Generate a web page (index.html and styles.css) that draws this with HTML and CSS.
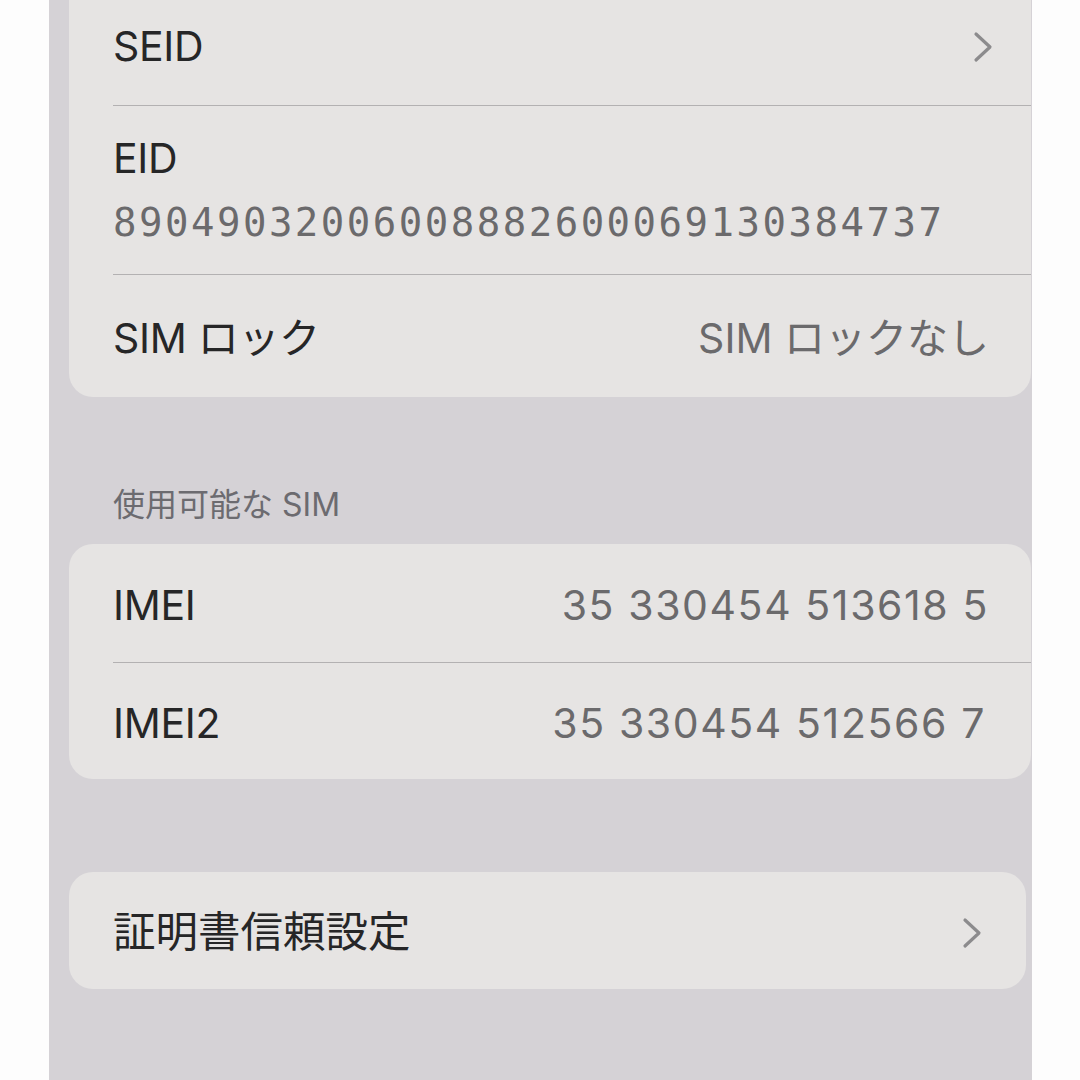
FILE: index.html
```html
<!DOCTYPE html>
<html lang="ja">
<head>
<meta charset="utf-8">
<link rel="stylesheet" href="styles.css">
</head>
<body>
<div class="screen">
  <div class="card card-top">
    <div class="row row-seid">
      <span class="label">SEID</span>
      <svg class="chev chev-1" viewBox="0 0 20 32"><polyline points="3,3 17,16 3,29"/></svg>
    </div>
    <div class="sep"></div>
    <div class="row row-eid">
      <span class="label">EID</span>
      <span class="mono">89049032006008882600069130384737</span>
    </div>
    <div class="sep"></div>
    <div class="row row-sim">
      <span class="label">SIM ロック</span>
      <span class="value">SIM ロックなし</span>
    </div>
  </div>

  <div class="header">使用可能な SIM</div>

  <div class="card card-imei">
    <div class="row row-imei1">
      <span class="label">IMEI</span>
      <span class="value num">35 330454 513618 5</span>
    </div>
    <div class="sep"></div>
    <div class="row row-imei2">
      <span class="label">IMEI2</span>
      <span class="value num">35 330454 512566 7</span>
    </div>
  </div>

  <div class="card card-cert">
    <div class="row row-cert">
      <span class="label label-cert">証明書信頼設定</span>
      <svg class="chev chev-2" viewBox="0 0 20 32"><polyline points="3,3 17,16 3,29"/></svg>
    </div>
  </div>
</div>
</body>
</html>
```
FILE: styles.css
```css
html, body {
  margin: 0;
  padding: 0;
  background: #fdfdfd;
}
body {
  width: 1080px;
  height: 1080px;
  overflow: hidden;
  font-family: Inter, "Noto Sans CJK JP", sans-serif;
}
.screen {
  margin-left: 49px;
  width: 983px;
  height: 1080px;
  background: #d5d2d6;
  display: flex;
  flex-direction: column;
  padding-left: 20px;
  box-sizing: border-box;
  overflow: hidden;
}
.card {
  background: #e6e4e3;
  border-radius: 24px;
  margin-right: 1px;
  display: flex;
  flex-direction: column;
}
.card-top {
  margin-top: -12px;
  border-radius: 0 0 24px 24px;
}
.row {
  display: flex;
  align-items: center;
  justify-content: space-between;
  padding: 0 38px 0 44px;
  box-sizing: border-box;
}
.label {
  font-size: 41px;
  color: #262627;
  line-height: 1;
  letter-spacing: -0.3px;
}
.label-cert {
  font-size: 42.5px;
  letter-spacing: 0;
}
.value {
  font-size: 41px;
  color: #6b6a6c;
  line-height: 1;
}
.num {
  letter-spacing: 1.6px;
}
.sep {
  height: 1px;
  background: #b3b1b2;
  margin-left: 44px;
}
.row-seid { height: 117px; }
.row-eid {
  height: 168px;
  flex-direction: column;
  align-items: flex-start;
  justify-content: flex-start;
  padding-top: 32px;
  gap: 24px;
}
.mono {
  font-family: "DejaVu Sans Mono", monospace;
  font-size: 39px;
  letter-spacing: 2.5px;
  color: #6b6a6c;
  line-height: 1;
}
.row-sim { height: 122px; padding-top: 4px; }
.row-sim .value { margin-right: 4px; }
.header {
  font-size: 32px;
  color: #6c6b70;
  margin: 93px 0 0 44px;
  height: 54px;
  line-height: 30px;
}
.card-imei { margin-right: 1px; }
.row-imei1 { height: 118px; padding-top: 4px; }
.row-imei2 { height: 116px; padding-top: 4px; }
.row-imei1 .value { margin-right: 4px; }
.row-imei2 .value { margin-right: 7px; }
.card-cert {
  margin-top: 93px;
  margin-right: 6px;
}
.row-cert { height: 117px; padding-right: 44px; padding-top: 4px; }
.chev {
  width: 20px;
  height: 32px;
  fill: none;
  stroke: #8c8b8d;
  stroke-width: 3.2;
  stroke-linecap: round;
  stroke-linejoin: round;
}
```
